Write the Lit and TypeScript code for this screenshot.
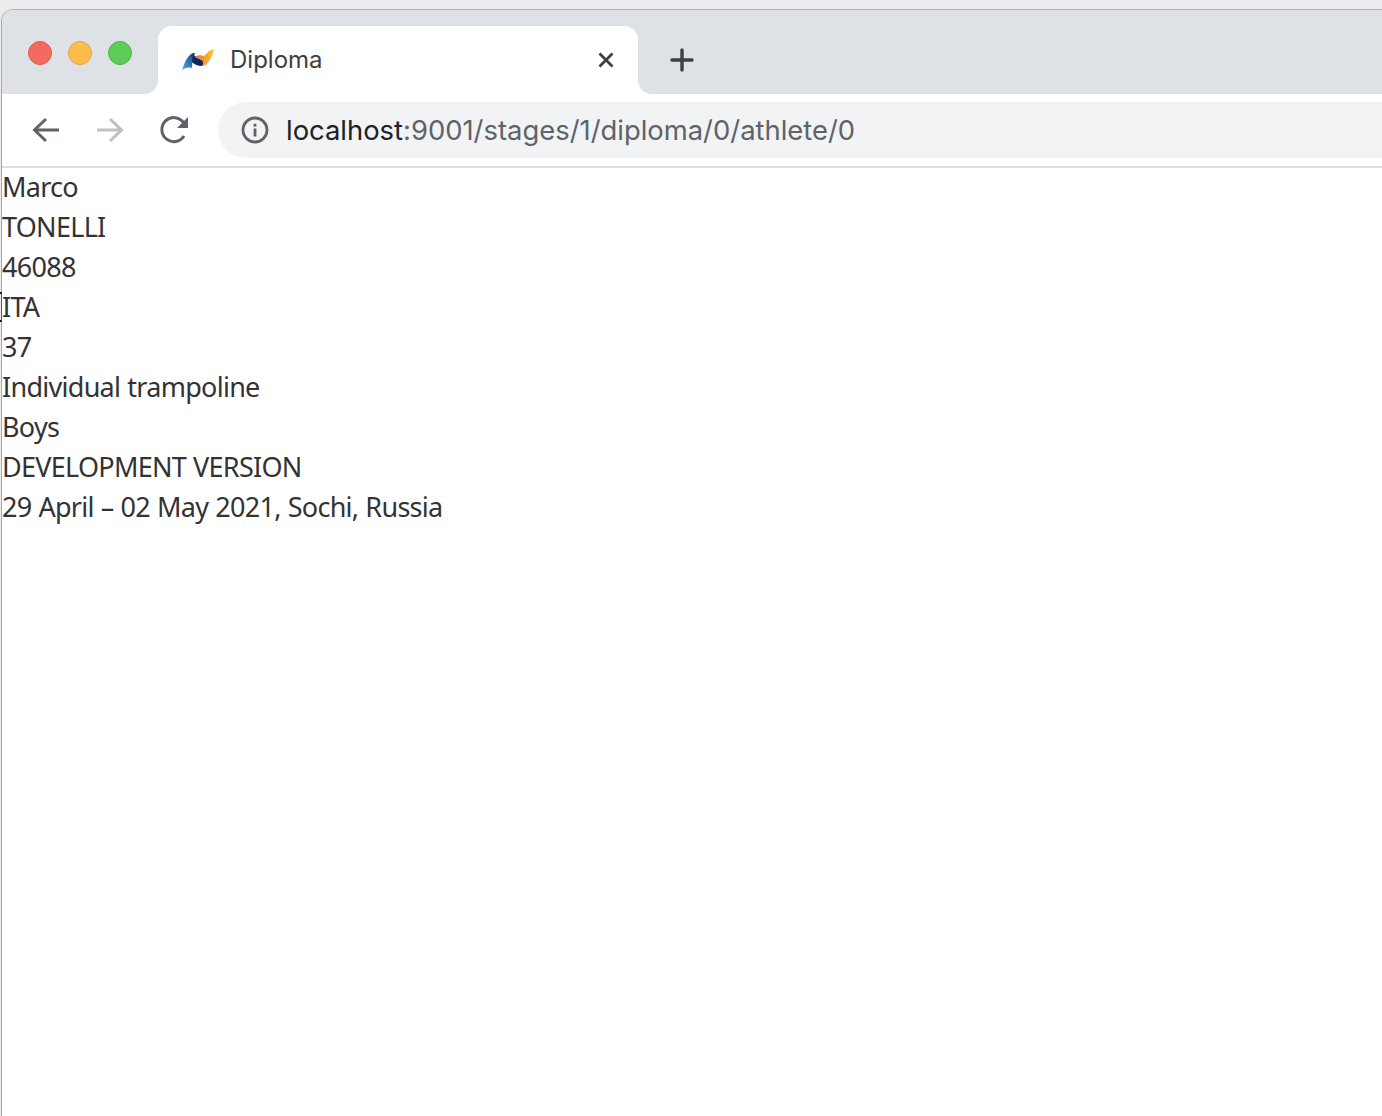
import { LitElement, html, css } from "lit";
import { customElement } from "lit/decorators.js";

const LINES = [
  "Marco",
  "TONELLI",
  "46088",
  "ITA",
  "37",
  "Individual trampoline",
  "Boys",
  "DEVELOPMENT VERSION",
  "29 April – 02 May 2021, Sochi, Russia",
];

@customElement("app-root")
export class AppRoot extends LitElement {
  static styles = css`
    :host {
      display: block;
      position: relative;
      height: 1116px;
      overflow: hidden;
      background: #ececec;
      font-family: "Inter", "Liberation Sans", Arial, sans-serif;
    }
    .window {
      margin: 9px 0 0 1px;
      height: 1107px;
      border-top: 1px solid #b4b4b4;
      border-left: 1px solid #a8a8a8;
      border-top-left-radius: 12px;
      overflow: hidden;
      background: #fff;
    }
    .strip {
      display: flex;
      height: 84px;
    }
    .lights {
      width: 156px;
      box-sizing: border-box;
      background: #dee1e6;
      border-bottom-right-radius: 14px;
      display: flex;
      gap: 16px;
      padding: 31px 0 0 26px;
    }
    .light {
      width: 24px;
      height: 24px;
      box-sizing: border-box;
      border-radius: 50%;
      border: 1px solid;
    }
    .red { background: #f26a60; border-color: #dc5a50; }
    .yellow { background: #fbbd4c; border-color: #e0a53c; }
    .green { background: #5fcb58; border-color: #50b348; }
    .tabcol {
      width: 480px;
      background: #dee1e6;
      padding-top: 16px;
      display: flex;
    }
    .tab {
      flex: 1;
      background: #fff;
      border-radius: 14px 14px 0 0;
      display: flex;
      align-items: center;
      padding: 0 22px 0 24px;
    }
    .favicon { width: 32px; height: 24px; flex: none; }
    .title {
      margin-left: 16px;
      margin-bottom: 2px;
      flex: 1;
      font-size: 24px;
      color: #3c4043;
    }
    .close { width: 20px; height: 20px; flex: none; }
    .rest {
      flex: 1;
      background: #dee1e6;
      border-bottom-left-radius: 14px;
      display: flex;
      align-items: center;
      padding: 16px 0 0 32px;
    }
    .plus { width: 24px; height: 24px; }
    .toolbar {
      height: 74px;
      box-sizing: border-box;
      border-bottom: 2px solid #dedede;
      display: flex;
      align-items: center;
      padding: 0 0 0 28px;
    }
    .nav { width: 32px; height: 32px; flex: none; margin-right: 32px; }
    .nav:nth-child(3) { margin-right: 28px; }
    .omnibox {
      flex: 1;
      height: 56px;
      background: #f1f3f4;
      border-radius: 28px 0 0 28px;
      display: flex;
      align-items: center;
      padding-left: 23px;
    }
    .info { width: 28px; height: 28px; flex: none; }
    .url {
      margin-left: 17px;
      font-size: 27.4px;
      color: #5f6368;
      white-space: nowrap;
    }
    .host { color: #202124; }
    .content {
      margin-top: -1px;
      font-family: "Noto Sans", sans-serif;
      font-size: 27px;
      line-height: 40px;
      color: #333;
      letter-spacing: -0.72px;
      word-spacing: 0.7px;
    }
    .cursor {
      position: absolute;
      left: 0;
      top: 292px;
      width: 2px;
      height: 30px;
      box-sizing: border-box;
      border-top: 2px solid #111;
      border-bottom: 2px solid #111;
      border-right: 1px solid #555;
    }
  `;

  render() {
    return html`
      <div class="window">
        <div class="strip">
          <div class="lights">
            <div class="light red"></div>
            <div class="light yellow"></div>
            <div class="light green"></div>
          </div>
          <div class="tabcol">
            <div class="tab">
              <svg class="favicon" viewBox="0 0 32 24">
                <defs>
                  <linearGradient id="b" x1="0" y1="1" x2="1" y2="0">
                    <stop offset="0" stop-color="#45b4e8" />
                    <stop offset="1" stop-color="#123a80" />
                  </linearGradient>
                  <linearGradient id="o" x1="0" y1="0" x2="1" y2="0">
                    <stop offset="0" stop-color="#e8702a" />
                    <stop offset="1" stop-color="#fcc532" />
                  </linearGradient>
                </defs>
                <path d="M0 22 L3 14 C5 10 8 6 11 5 L13 5 C11 10 10 15 10 20 C6 19 3 20 0 22 Z" fill="url(#b)" />
                <path d="M11 6 C13 9 17 11 22 13 C22 15 21 17 20 18 C15 18 12 16 10 14 Z" fill="#10245f" />
                <path d="M12 9 C16 7 19 7 22 8 L27 3 L32 1 C31 6 29 12 24 17 L21 18 C22 14 20 12 18 11 C16 10 14 10 12 9 Z" fill="url(#o)" />
              </svg>
              <span class="title">Diploma</span>
              <svg class="close" viewBox="0 0 20 20">
                <path d="M3.5 3.5 L16.5 16.5 M16.5 3.5 L3.5 16.5" stroke="#3c4043" stroke-width="2.8" fill="none" />
              </svg>
            </div>
          </div>
          <div class="rest">
            <svg class="plus" viewBox="0 0 24 24">
              <path d="M12 2 V22 M2 12 H22" stroke="#3c4043" stroke-width="3.4" stroke-linecap="round" fill="none" />
            </svg>
          </div>
        </div>
        <div class="toolbar">
          <svg class="nav" viewBox="0 0 32 32">
            <path d="M29 16 H5 M16 5 L4.5 16 L16 27" stroke="#5f6368" stroke-width="3" fill="none" />
          </svg>
          <svg class="nav" viewBox="0 0 32 32">
            <path d="M3 16 H27 M16 5 L27.5 16 L16 27" stroke="#bdc1c6" stroke-width="3" fill="none" />
          </svg>
          <svg class="nav" viewBox="0 0 32 32">
            <path d="M26 22 A 12 12 0 1 1 25.5 8.5" stroke="#5f6368" stroke-width="3" fill="none" />
            <path d="M30 3 V14 H19 Z" fill="#5f6368" />
          </svg>
          <div class="omnibox">
            <svg class="info" viewBox="0 0 28 28">
              <circle cx="14" cy="14" r="12" stroke="#5f6368" stroke-width="2.8" fill="none" />
              <rect x="12.6" y="12.5" width="2.8" height="8" fill="#5f6368" />
              <rect x="12.6" y="7.8" width="2.8" height="2.8" fill="#5f6368" />
            </svg>
            <div class="url"><span class="host">localhost</span>:9001/stages/1/diploma/0/athlete/0</div>
          </div>
        </div>
        <div class="content">${LINES.map((l) => html`<div>${l}</div>`)}</div>
      </div>
      <div class="cursor"></div>
    `;
  }
}
